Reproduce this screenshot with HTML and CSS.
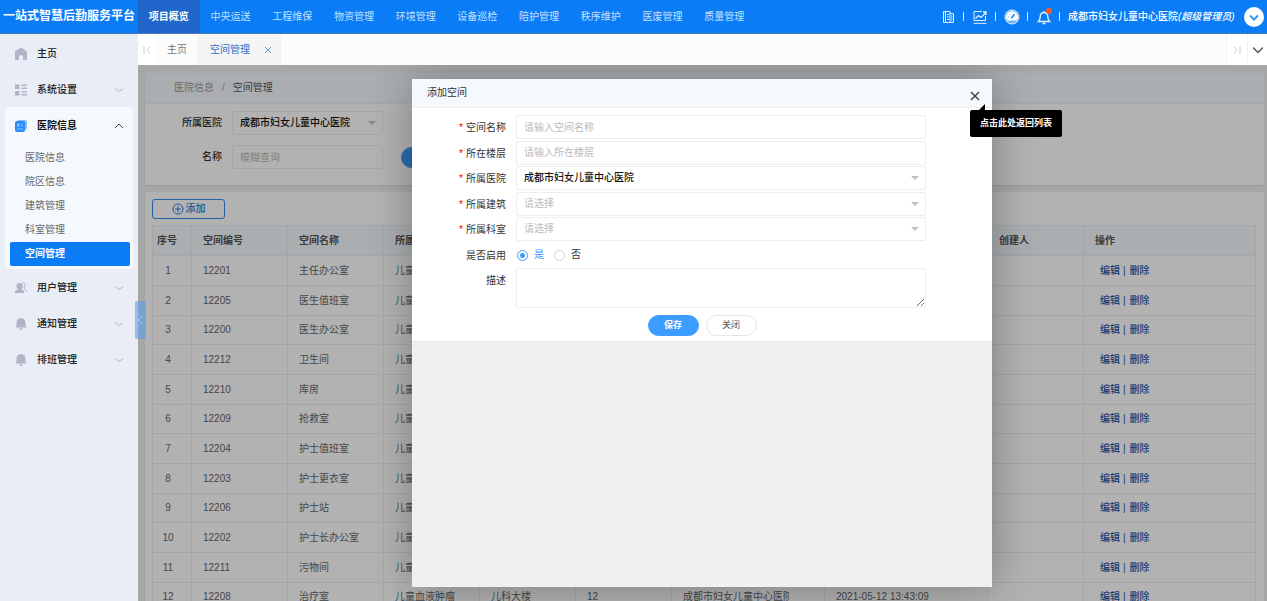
FILE: index.html
```html
<!DOCTYPE html>
<html lang="zh-CN">
<head>
    <meta charset="UTF-8">
    <meta name="viewport" content="width=device-width, initial-scale=1.0">
    <title>一站式智慧后勤服务平台</title>
    <link rel="stylesheet" href="styles.css">
</head>
<body>
    <header class="header">
        <h1 class="logo">一站式智慧后勤服务平台</h1>
        <nav class="top-nav">
            <a href="#" class="active">项目概览</a>
            <a href="#">中央运送</a>
            <a href="#">工程维保</a>
            <a href="#">物资管理</a>
            <a href="#">环境管理</a>
            <a href="#">设备巡检</a>
            <a href="#">陪护管理</a>
            <a href="#">秩序维护</a>
            <a href="#">医废管理</a>
            <a href="#">质量管理</a>
        </nav>
        <div class="tools">
            <button type="button" class="tool" aria-label="文档">
                <svg viewBox="0 0 16 16" fill="none" stroke="currentColor"><path d="M3.500 2.500h6.500v11H3.500zM10 4.500h3.500v9H10M5.500 2.500v11M7 5.500h2M7 8h2M7 10.500h2M11 7h1.500M11 9h1.500M11 11h1.500"/></svg>
            </button>
            <span class="sep"></span>
            <button type="button" class="tool" aria-label="统计">
                <svg viewBox="0 0 16 16" fill="none" stroke="currentColor"><path d="M10 2.500H2v9h11.500V7M1.500 14.300h13" /><path d="M3.500 9.500l3-3 2.500 2 5-5M11 3h3v3" stroke-width="1.300"/></svg>
            </button>
            <span class="sep"></span>
            <button type="button" class="tool" aria-label="仪表盘">
                <svg viewBox="0 0 16 16"><circle cx="8" cy="8" r="7" fill="#6db2fb" stroke="currentColor"/><path d="M3.200 11.500a5.900 5.900 0 1 1 9.600 0z" fill="#fff"/><path d="M7.300 9.200l3.200-4" stroke="#0a7cf6" stroke-width="1.500"/><path d="M3.800 8h1M5.500 5l.7.700M5 12.500h6" stroke="#6db2fb"/></svg>
            </button>
            <span class="sep"></span>
            <button type="button" class="tool" aria-label="消息">
                <svg viewBox="0 0 16 16" fill="none" stroke="currentColor" stroke-width="1.300"><path d="M2.500 12.500c1.500-1 1.500-2 1.700-5 .2-2.500 1.500-4 3.800-4s3.600 1.500 3.800 4c.2 3 .2 4 1.700 5zM8 3.500V2M6.500 14.500h3"/></svg>
                <span class="dot"></span>
            </button>
            <span class="sep"></span>
            <span class="user">成都市妇女儿童中心医院<em>(超级管理员)</em></span>
            <button type="button" class="user-more" aria-label="更多">
                <svg viewBox="0 0 20 20" fill="none" stroke="#2f9bf0" stroke-width="2"><path d="M6 8.500l4 4 4-4"/></svg>
            </button>
        </div>
    </header>

    <div class="layout">
        <aside class="sidebar">
            <a href="#" class="menu-item">
                <svg class="icon" viewBox="0 0 14 14"><path d="M7 .5L1.500 4Q1 4.400 1 5v7q0 1 1 1h3V9.500Q5 8 7 8t2 1.500V13h3q1 0 1-1V5q0-.6-.5-1z"/></svg>
                <span>主页</span>
            </a>
            <a href="#" class="menu-item">
                <svg class="icon" viewBox="0 0 14 14"><path d="M1 1.500h4.500V6H1zM1 8h4.500v4.500H1zM7.500 1.500H13V3H7.500zM7.500 4.500H13V6H7.500zM7.500 8H13v1.500H7.500zM7.500 11H13v1.500H7.500z"/></svg>
                <span>系统设置</span>
                <svg class="arrow" viewBox="0 0 8 8"><path d="M0 2.500l4 3 4-3"/></svg>
            </a>
            <div class="menu-group">
                <a href="#" class="menu-item open">
                    <svg class="icon" viewBox="0 0 14 14"><rect x="3" y="1" width="10" height="10" rx="2" fill="#86bcfb"/><rect x="1" y="2" width="10" height="11" rx="2" fill="#2a8af8"/><path d="M3 4.500h2.500v3H3zM7 4.500h2v1H7zM7 6.500h2v1H7zM3 9.500h6v1H3z" fill="#8cc0fc"/></svg>
                    <span>医院信息</span>
                    <svg class="arrow" viewBox="0 0 8 8"><path d="M0 6l4-4 4 4"/></svg>
                </a>
                <div class="submenu">
                    <a href="#">医院信息</a>
                    <a href="#">院区信息</a>
                    <a href="#">建筑管理</a>
                    <a href="#">科室管理</a>
                    <a href="#" class="active">空间管理</a>
                </div>
            </div>
            <a href="#" class="menu-item">
                <svg class="icon" viewBox="0 0 14 14"><path d="M5.500 2a3 3 0 0 1 2 5.500Q8 9 10 10v2H1v-2q2.500-1 2.700-2.500A3 3 0 0 1 5.500 2z"/><path d="M8.500 1.500q3 .5 2.500 3.500-.2 1-1 2 .5 1.500 3 4" fill="none" stroke="#b0b4c6"/></svg>
                <span>用户管理</span>
                <svg class="arrow" viewBox="0 0 8 8"><path d="M0 2.500l4 3 4-3"/></svg>
            </a>
            <a href="#" class="menu-item">
                <svg class="icon" viewBox="0 0 14 14"><path d="M7 1q4.500.5 4.500 5v3l1.500 1.500H1L2.500 9V6Q2.500 1.500 7 1zM5 11.500h4q-.5 1.500-2 1.500t-2-1.500z"/></svg>
                <span>通知管理</span>
                <svg class="arrow" viewBox="0 0 8 8"><path d="M0 2.500l4 3 4-3"/></svg>
            </a>
            <a href="#" class="menu-item">
                <svg class="icon" viewBox="0 0 14 14"><path d="M7 1q4.500.5 4.500 5v3l1.500 1.500H1L2.500 9V6Q2.500 1.500 7 1zM5 11.500h4q-.5 1.500-2 1.500t-2-1.500z"/></svg>
                <span>排班管理</span>
                <svg class="arrow" viewBox="0 0 8 8"><path d="M0 2.500l4 3 4-3"/></svg>
            </a>
            <button type="button" class="collapse" aria-label="收起菜单">
                <svg viewBox="0 0 6 10"><path d="M5 1L1 5l4 4"/></svg>
            </button>
        </aside>

        <main class="main">
            <div class="tabs">
                <button type="button" class="tab-btn first" aria-label="向左">
                    <svg viewBox="0 0 8 8"><path d="M1 0v8M7 1L4 4l3 3"/></svg>
                </button>
                <a href="#" class="tab">主页</a>
                <a href="#" class="tab active">空间管理
                    <svg viewBox="0 0 6 6"><path d="M0 0l6 6M6 0L0 6"/></svg>
                </a>
                <button type="button" class="tab-btn last" aria-label="向右">
                    <svg viewBox="0 0 8 8"><path d="M7 0v8M1 1l3 3-3 3"/></svg>
                </button>
                <button type="button" class="tab-btn down" aria-label="更多标签">
                    <svg viewBox="0 0 10 8"><path d="M0 1.500l5 5 5-5"/></svg>
                </button>
            </div>

            <div class="content">
                <section class="card">
                    <div class="breadcrumb"><a href="#">医院信息</a><span>/</span><b>空间管理</b></div>
                    <form class="search">
                        <label for="s-hospital">所属医院</label>
                        <div class="select"><select id="s-hospital"><option>成都市妇女儿童中心医院</option></select></div>
                        <label for="s-name">名称</label>
                        <input type="text" id="s-name" placeholder="模糊查询">
                        <button type="button" class="btn primary" aria-label="查询"></button>
                    </form>
                </section>

                <section class="card list">
                    <button type="button" class="btn-add">
                        <svg viewBox="0 0 12 12"><circle cx="6" cy="6" r="5"/><path d="M6 3v6M3 6h6"/></svg>添加
                    </button>
                    <table class="table">
                        <colgroup>
                            <col class="c-no"><col class="c-md"><col class="c-md"><col class="c-md"><col class="c-md"><col class="c-md"><col class="c-hospital"><col class="c-time"><col class="c-md"><col>
                        </colgroup>
                        <thead>
                            <tr><th>序号</th><th>空间编号</th><th>空间名称</th><th>所属科室</th><th></th><th></th><th></th><th></th><th>创建人</th><th>操作</th></tr>
                        </thead>
                        <tbody>
                            <tr><td>1</td><td>12201</td><td>主任办公室</td><td>儿童血液肿瘤</td><td></td><td></td><td></td><td></td><td></td><td><a href="#">编辑</a>|<a href="#">删除</a></td></tr>
                            <tr><td>2</td><td>12205</td><td>医生值班室</td><td>儿童血液肿瘤</td><td></td><td></td><td></td><td></td><td></td><td><a href="#">编辑</a>|<a href="#">删除</a></td></tr>
                            <tr><td>3</td><td>12200</td><td>医生办公室</td><td>儿童血液肿瘤</td><td></td><td></td><td></td><td></td><td></td><td><a href="#">编辑</a>|<a href="#">删除</a></td></tr>
                            <tr><td>4</td><td>12212</td><td>卫生间</td><td>儿童血液肿瘤</td><td></td><td></td><td></td><td></td><td></td><td><a href="#">编辑</a>|<a href="#">删除</a></td></tr>
                            <tr><td>5</td><td>12210</td><td>库房</td><td>儿童血液肿瘤</td><td></td><td></td><td></td><td></td><td></td><td><a href="#">编辑</a>|<a href="#">删除</a></td></tr>
                            <tr><td>6</td><td>12209</td><td>抢救室</td><td>儿童血液肿瘤</td><td></td><td></td><td></td><td></td><td></td><td><a href="#">编辑</a>|<a href="#">删除</a></td></tr>
                            <tr><td>7</td><td>12204</td><td>护士值班室</td><td>儿童血液肿瘤</td><td></td><td></td><td></td><td></td><td></td><td><a href="#">编辑</a>|<a href="#">删除</a></td></tr>
                            <tr><td>8</td><td>12203</td><td>护士更衣室</td><td>儿童血液肿瘤</td><td></td><td></td><td></td><td></td><td></td><td><a href="#">编辑</a>|<a href="#">删除</a></td></tr>
                            <tr><td>9</td><td>12206</td><td>护士站</td><td>儿童血液肿瘤</td><td></td><td></td><td></td><td></td><td></td><td><a href="#">编辑</a>|<a href="#">删除</a></td></tr>
                            <tr><td>10</td><td>12202</td><td>护士长办公室</td><td>儿童血液肿瘤</td><td></td><td></td><td></td><td></td><td></td><td><a href="#">编辑</a>|<a href="#">删除</a></td></tr>
                            <tr><td>11</td><td>12211</td><td>污物间</td><td>儿童血液肿瘤</td><td></td><td></td><td></td><td></td><td></td><td><a href="#">编辑</a>|<a href="#">删除</a></td></tr>
                            <tr><td>12</td><td>12208</td><td>治疗室</td><td>儿童血液肿瘤</td><td>儿科大楼</td><td>12</td><td><div>成都市妇女儿童中心医院</div></td><td>2021-05-12 13:43:09</td><td></td><td><a href="#">编辑</a>|<a href="#">删除</a></td></tr>
                        </tbody>
                    </table>
                </section>

                <div class="mask">
                    <div class="modal" role="dialog" aria-labelledby="modal-title">
                        <div class="modal-head">
                            <h2 id="modal-title">添加空间</h2>
                            <button type="button" class="close" aria-label="关闭窗口">
                                <svg viewBox="0 0 10 10"><path d="M1 1l8 8M9 1L1 9"/></svg>
                            </button>
                            <div class="tip">点击此处返回列表</div>
                        </div>
                        <form class="modal-form">
                            <div class="fields">
                                <label for="f-name" class="required">空间名称</label>
                                <input type="text" id="f-name" placeholder="请输入空间名称">
                                <label for="f-floor" class="required">所在楼层</label>
                                <input type="text" id="f-floor" placeholder="请输入所在楼层">
                                <label for="f-hospital" class="required">所属医院</label>
                                <div class="select"><select id="f-hospital"><option>成都市妇女儿童中心医院</option></select></div>
                                <label for="f-building" class="required">所属建筑</label>
                                <div class="select"><select id="f-building" class="empty"><option>请选择</option></select></div>
                                <label for="f-dept" class="required">所属科室</label>
                                <div class="select"><select id="f-dept" class="empty"><option>请选择</option></select></div>
                                <span class="label">是否启用</span>
                                <div class="radios">
                                    <input type="radio" name="enabled" id="f-yes" checked><label for="f-yes">是</label>
                                    <input type="radio" name="enabled" id="f-no"><label for="f-no">否</label>
                                </div>
                                <label for="f-desc" class="desc">描述</label>
                                <textarea id="f-desc"></textarea>
                            </div>
                            <div class="actions">
                                <button type="button" class="btn primary">保存</button>
                                <button type="button" class="btn">关闭</button>
                            </div>
                        </form>
                    </div>
                </div>
            </div>
        </main>
    </div>
</body>
</html>
```

FILE: styles.css
```css
* {
    box-sizing: border-box;
}
body {
    display: flex;
    flex-direction: column;
    height: 100vh;
    margin: 0;
    overflow: hidden;
    font: 10px/16px "Liberation Sans", "Noto Sans CJK SC", sans-serif;
    color: #333;
}
a {
    color: inherit;
    text-decoration: none;
}
button, input, select, textarea {
    margin: 0;
    font: inherit;
}
button {
    padding: 0;
    border: 0;
    background: none;
    cursor: pointer;
}
svg {
    display: block;
    flex: none;
}

/* header */
.header {
    display: flex;
    flex: none;
    height: 34px;
    background: #0a7cf6;
    color: #fff;
    border-bottom: 1px solid #4a78b4;
}
.logo {
    flex: none;
    width: 138px;
    margin: 0;
    font-size: 12px;
    font-weight: bold;
    line-height: 33px;
    text-align: center;
    white-space: nowrap;
}
.top-nav {
    display: grid;
    grid-template-columns: repeat(10, 1fr);
    width: 617px;
    text-align: center;
    line-height: 33px;
    color: #c4e0ff;
}
.top-nav .active {
    background: #2166ca;
    color: #fff;
    font-weight: bold;
}
.tools {
    display: flex;
    align-items: center;
    gap: 7px;
    margin-left: auto;
    padding-right: 3px;
}
.tool {
    position: relative;
    width: 16px;
    height: 16px;
    color: #e4f1ff;
}
.tool svg {
    width: 16px;
    height: 16px;
}
.dot {
    position: absolute;
    top: -1px;
    right: 0;
    width: 6px;
    height: 6px;
    border-radius: 50%;
    background: #ff5722;
}
.sep {
    width: 1px;
    height: 9px;
    margin-right: 1px;
    background: #d3e8ff;
}
.user {
    width: 169px;
    font-weight: 500;
    white-space: nowrap;
}
.user-more {
    width: 20px;
    height: 20px;
    border-radius: 50%;
    background: #fff;
}

/* sidebar */
.layout {
    display: flex;
    flex: 1;
    min-height: 0;
}
.sidebar {
    position: relative;
    flex: none;
    width: 138px;
    padding: 1px 5px;
    background: #e9edf6;
}
.menu-item {
    display: flex;
    align-items: center;
    gap: 9px;
    height: 36px;
    padding: 1px 10px 0 9px;
    color: #222;
    font-weight: 500;
}
.menu-item.open {
    color: #111;
    font-weight: bold;
}
.icon {
    width: 14px;
    height: 14px;
    fill: #b0b4c6;
}
.arrow {
    width: 8px;
    height: 8px;
    margin-left: auto;
    fill: none;
    stroke: #b5b9c2;
}
.open .arrow {
    stroke: #444;
}
.menu-group {
    border-radius: 4px;
    background: #f5f9fd;
}
.submenu {
    padding: 3px 3px 3px 5px;
}
.submenu a {
    display: block;
    padding-left: 15px;
    line-height: 24px;
    color: #666;
}
.submenu .active {
    border-radius: 2px;
    background: #0a7cf6;
    color: #fff;
    font-weight: bold;
}
.collapse {
    position: absolute;
    z-index: 5;
    top: 50%;
    right: -8px;
    width: 11px;
    height: 38px;
    margin-top: -17px;
    padding-left: 2px;
    border-radius: 2px;
    background: rgba(92, 158, 232, 0.6);
}
.collapse svg {
    width: 6px;
    height: 10px;
    fill: none;
    stroke: #b5cbe5;
}

/* tabs */
.main {
    display: flex;
    flex: 1;
    flex-direction: column;
    min-width: 0;
}
.tabs {
    display: flex;
    flex: none;
    height: 31px;
    line-height: 32px;
    background: #fcfcfc;
    color: #777;
}
.tab {
    padding: 0 10px 0 11px;
    border-right: 1px solid #f4f4f4;
}
.tab.active {
    display: flex;
    align-items: center;
    gap: 15px;
    padding: 0 9px 0 12px;
    background: #f5f5f5;
    color: #2e6fce;
}
.tab svg {
    width: 6px;
    height: 6px;
    fill: none;
    stroke: #5c97e2;
}
.tab-btn {
    display: flex;
    align-items: center;
    justify-content: center;
    width: 18px;
    background: #fff;
}
.tab-btn svg {
    width: 8px;
    height: 8px;
    fill: none;
    stroke: #ccc;
}
.tab-btn.last {
    width: 22px;
    margin-left: auto;
    border: solid #f2f2f2;
    border-width: 0 1px;
}
.tab-btn.down {
    width: 19px;
}
.tab-btn.down svg {
    width: 10px;
    stroke: #555;
    stroke-width: 1.5;
}

/* content */
.content {
    position: relative;
    flex: 1;
    min-height: 0;
    padding: 8px 3px 0 7px;
    overflow: hidden;
    background: #f0f0f0;
}
.card {
    margin-bottom: 7px;
    border-radius: 2px;
    background: #fff;
    box-shadow: 0 1px 2px rgba(0, 0, 0, 0.1);
}
.breadcrumb {
    display: flex;
    gap: 8px;
    padding: 7px 29px;
    border-bottom: 1px solid #eee;
    background: #f5f9fd;
    color: #999;
}
.breadcrumb b {
    color: #555;
    font-weight: normal;
}
.search {
    display: grid;
    grid-template-columns: 77px 151px auto;
    gap: 10px;
    justify-content: start;
    align-items: center;
    padding: 7px 0 16px;
}
.search label {
    text-align: right;
    font-weight: 500;
}
.search .select {
    grid-column: 2 / 4;
    width: 151px;
}
.search .btn {
    margin-left: 8px;
}
input[type="text"], select, textarea {
    display: block;
    width: 100%;
    height: 24px;
    padding: 0 7px;
    border: 1px solid #eee;
    border-radius: 2px;
    background: #fff;
    color: #111;
    outline: none;
}
select {
    appearance: none;
    font-weight: 500;
}
select.empty, ::placeholder {
    color: #bbb;
    font-weight: normal;
}
.select {
    position: relative;
}
.select::after {
    content: "";
    position: absolute;
    top: 10px;
    right: 7px;
    border: 4px solid transparent;
    border-top-color: #c2c2c2;
    border-bottom: 0;
    pointer-events: none;
}
.btn {
    width: 51px;
    height: 21px;
    border: 1px solid #e6e6e6;
    border-radius: 11px;
    background: #fff;
    color: #555;
    font-size: 9px;
    line-height: 19px;
}
.btn.primary {
    border-color: #3d9cff;
    background: #3d9cff;
    color: #fff;
    font-weight: bold;
}

/* list */
.list {
    padding: 7px 8px 7px 7px;
}
.btn-add {
    display: flex;
    align-items: center;
    justify-content: center;
    gap: 2px;
    width: 73px;
    height: 20px;
    margin-bottom: 6px;
    border: 1px solid #348af0;
    border-radius: 3px;
    color: #2a7de0;
    font-weight: 500;
}
.btn-add svg {
    width: 12px;
    height: 12px;
    fill: none;
    stroke: #2a7de0;
}
.table {
    width: 100%;
    table-layout: fixed;
    border-collapse: collapse;
    color: #666;
}
.c-no {
    width: 39px;
}
.c-md {
    width: 96px;
}
.c-hospital {
    width: 153px;
}
.c-time {
    width: 163px;
}
.table th, .table td {
    height: 30px;
    padding: 0 11px;
    border: 1px solid #eee;
    text-align: left;
    white-space: nowrap;
}
.table tr:nth-child(3n) td {
    height: 29px;
}
.table th {
    background: #f5f9fd;
    color: #555;
}
.table th:first-child, .table td:first-child {
    padding: 0 4px;
}
.table td:first-child {
    padding-right: 12px;
    text-align: center;
}
.table td:last-child {
    padding-left: 16px;
    color: #1d57a8;
    font-weight: 500;
}
.table td a:first-child {
    margin-right: 3px;
}
.table td a:last-child {
    margin-left: 4px;
}
.table td div {
    width: 106px;
    overflow: hidden;
}

/* dialog */
.mask {
    position: absolute;
    inset: 0;
    padding: 14px 1px 14px 0;
    background: rgba(0, 0, 0, 0.3);
}
.modal {
    width: 580px;
    height: 100%;
    margin: 0 auto;
    background: #f0f0f0;
    box-shadow: 1px 1px 40px rgba(0, 0, 0, 0.3);
}
.modal-head {
    position: relative;
    display: flex;
    justify-content: space-between;
    height: 29px;
    padding: 0 12px 0 15px;
    border-bottom: 1px solid #eee;
    background: #f5f9fd;
}
.modal-head h2 {
    margin: 0;
    font-size: 10px;
    font-weight: normal;
    line-height: 28px;
}
.close {
    align-self: flex-end;
    padding-bottom: 6px;
}
.close svg {
    width: 10px;
    height: 10px;
    fill: none;
    stroke: #444;
    stroke-width: 1.5;
}
.tip {
    position: absolute;
    top: 31px;
    left: 558px;
    padding: 5px 10px 6px;
    border-radius: 2px;
    background: #000;
    color: #fff;
    font-size: 9px;
    font-weight: bold;
    white-space: nowrap;
}
.tip::before {
    content: "";
    position: absolute;
    top: -6px;
    left: 9px;
    border: solid transparent;
    border-width: 0 0 6px 6px;
    border-bottom-color: #000;
}
.modal-form {
    padding: 7px 66px 5px 0;
    border-bottom: 1px solid #e6e6e6;
    background: #fff;
}
.fields {
    display: grid;
    grid-template-columns: 94px 1fr;
    grid-template-rows: repeat(6, 1fr) 40px;
    column-gap: 10px;
    height: 193px;
}
.fields > label, .label {
    line-height: 25px;
    text-align: right;
}
.required::before {
    content: "*";
    margin-right: 3px;
    color: #f00;
}
.radios {
    display: flex;
    align-items: center;
}
.radios input {
    appearance: none;
    width: 11px;
    height: 11px;
    margin: 0 6px 0 1px;
    border: 1px solid #d2d2d2;
    border-radius: 50%;
}
.radios input:checked {
    border-color: #3d9cff;
    background: radial-gradient(#3d9cff 0 2px, transparent 3px);
}
.radios label {
    margin-right: 9px;
}
.radios input:checked + label {
    color: #3d9cff;
}
textarea {
    height: 40px;
    resize: vertical;
}
.actions {
    display: flex;
    justify-content: center;
    gap: 7px;
    margin-right: -66px;
    padding-top: 7px;
}
```
